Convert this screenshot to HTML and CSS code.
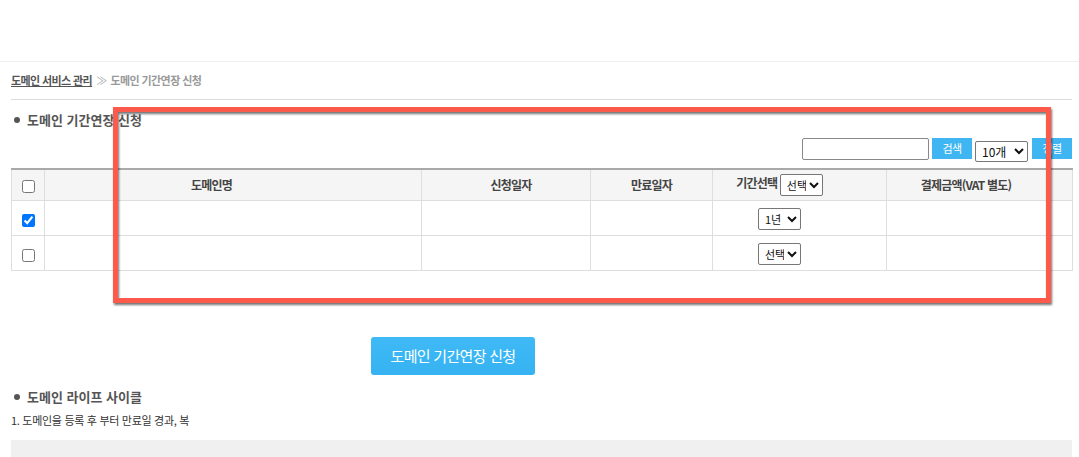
FILE: index.html
```html
<!DOCTYPE html>
<html lang="ko">
<head>
<meta charset="utf-8">
<title>도메인 기간연장 신청</title>
<link rel="stylesheet" href="styles.css">
</head>
<body>
<div class="page">
  <div class="topbar"></div>
  <div class="wrap">
    <div class="breadcrumb">
      <a class="crumb-link" href="#">도메인 서비스 관리</a>
      <span class="crumb-sep">≫</span>
      <span class="crumb-current">도메인 기간연장 신청</span>
    </div>

    <h2 class="section-title"><span class="dot"></span>도메인 기간연장 신청</h2>

    <div class="toolbar">
      <input class="search-input" type="text">
      <button class="btn-small" type="button">검색</button>
      <select class="count-select"><option>10개</option></select>
      <button class="btn-small btn-sort" type="button">정렬</button>
    </div>

    <table class="grid">
      <colgroup>
        <col class="c-check"><col class="c-domain"><col class="c-req"><col class="c-exp"><col class="c-period"><col class="c-pay">
      </colgroup>
      <thead>
        <tr>
          <th class="cell-check"><input type="checkbox"></th>
          <th class="cell-domain">도메인명</th>
          <th class="cell-req">신청일자</th>
          <th class="cell-exp">만료일자</th>
          <th class="cell-period">기간선택 <select class="mini-select"><option>선택</option></select></th>
          <th class="cell-pay">결제금액(VAT 별도)</th>
        </tr>
      </thead>
      <tbody>
        <tr>
          <td class="cell-check"><input type="checkbox" checked></td>
          <td></td>
          <td></td>
          <td></td>
          <td class="cell-period"><select class="mini-select"><option>1년</option></select></td>
          <td></td>
        </tr>
        <tr>
          <td class="cell-check"><input type="checkbox"></td>
          <td></td>
          <td></td>
          <td></td>
          <td class="cell-period"><select class="mini-select"><option>선택</option></select></td>
          <td></td>
        </tr>
      </tbody>
    </table>

    <div class="action-row">
      <button class="btn-apply" type="button">도메인 기간연장 신청</button>
    </div>

    <h2 class="section-title lifecycle-title"><span class="dot"></span>도메인 라이프 사이클</h2>
    <p class="note">1. 도메인을 등록 후 부터 만료일 경과, 복</p>
    <div class="gray-box"></div>
  </div>

  <div class="highlight"></div>
</div>
</body>
</html>
```

FILE: styles.css
```css
* { box-sizing: border-box; }

html, body {
  margin: 0;
  padding: 0;
  background: #fff;
}

body {
  font-family: "Noto Sans CJK KR", "Noto Sans", sans-serif;
  color: #333;
}

.page {
  position: relative;
  width: 1079px;
  overflow: hidden;
}

.topbar {
  height: 62px;
  border-bottom: 1px solid #efefef;
}

.wrap {
  padding: 0 7px 0 11px;
}

.breadcrumb {
  height: 38px;
  display: flex;
  align-items: center;
  gap: 4px;
  border-bottom: 1px solid #dcdcdc;
  font-size: 11px;
  font-weight: 700;
  letter-spacing: -0.6px;
  line-height: 1;
}

.crumb-link {
  color: #555;
  text-decoration: underline;
}

.crumb-sep {
  color: #aaa;
  font-weight: 400;
}

.crumb-current {
  color: #999;
}

.section-title {
  margin: 10px 0 0;
  height: 20px;
  display: flex;
  align-items: center;
  font-size: 13px;
  font-weight: 700;
  letter-spacing: 0;
  color: #555;
  line-height: 20px;
}

.dot {
  width: 6px;
  height: 6px;
  border-radius: 50%;
  background: #555;
  margin: 0 7px 0 3px;
}

.toolbar {
  margin-top: 8px;
  height: 22px;
  display: flex;
  justify-content: flex-end;
  align-items: flex-start;
}

.search-input {
  width: 127px;
  height: 22px;
  margin: 0;
  border: 1px solid #888;
  border-radius: 2px;
  padding: 0 4px;
}

.btn-small {
  width: 40px;
  height: 21px;
  margin: 0 0 0 3px;
  padding: 0;
  border: 0;
  background: #3fb5f2;
  color: #fff;
  font-family: inherit;
  font-size: 11px;
  letter-spacing: -0.5px;
  line-height: 21px;
}

.btn-sort {
  width: 40px;
  margin-left: 4px;
}

.count-select {
  width: 53px;
  height: 21px;
  margin: 3px 0 0 3px;
  font-family: inherit;
  font-size: 12px;
  border: 1px solid #777;
  border-radius: 2px;
  background: #fff;
  color: #111;
  padding: 0 0 0 2px;
}

.grid {
  margin-top: 8px;
  width: 1061px;
  border-collapse: collapse;
  table-layout: fixed;
  border-top: 2px solid #a9a9a9;
}

.c-check { width: 33px; }
.c-domain { width: 377px; }
.c-req { width: 169px; }
.c-exp { width: 122px; }
.c-period { width: 174px; }
.c-pay { width: 186px; }

.grid th,
.grid td {
  border: 1px solid #dedede;
  padding: 0;
  text-align: center;
  vertical-align: middle;
}

.grid th {
  height: 31px;
  background: #f5f5f5;
  font-size: 12px;
  font-weight: 700;
  letter-spacing: -0.8px;
  color: #444;
}

.grid td {
  height: 35px;
}

.grid input[type="checkbox"] {
  width: 13px;
  height: 13px;
  margin: 0;
  vertical-align: middle;
}

.cell-domain { padding-right: 43px !important; }
.cell-req { padding-left: 10px !important; }
.cell-period { padding-right: 40px !important; }
.cell-pay { padding-right: 27px !important; }

.mini-select {
  width: 43px;
  height: 22px;
  margin: 0;
  font-family: inherit;
  font-size: 11px;
  letter-spacing: 0;
  border: 1px solid #777;
  border-radius: 2px;
  background: #fff;
  color: #111;
  padding: 0 0 0 2px;
  vertical-align: middle;
}

.action-row {
  margin-top: 66px;
  padding-left: 360px;
}

.btn-apply {
  width: 164px;
  height: 38px;
  border: 0;
  border-radius: 3px;
  background: linear-gradient(#3fbaf6, #36b2f2);
  color: #fff;
  font-family: inherit;
  font-size: 15px;
  letter-spacing: -0.7px;
  padding: 0;
}

.lifecycle-title {
  margin-top: 12px;
}

.note {
  margin: 3px 0 0;
  font-size: 11px;
  letter-spacing: -0.3px;
  line-height: 20px;
  color: #333;
}

.gray-box {
  margin-top: 10px;
  height: 60px;
  background: #f0f0f0;
}

.highlight {
  position: absolute;
  left: 113px;
  top: 107px;
  width: 938px;
  height: 196px;
  border: 5px solid #fd5a4c;
  filter: drop-shadow(1px 2px 1px rgba(0, 0, 0, 0.55));
  pointer-events: none;
}
```
